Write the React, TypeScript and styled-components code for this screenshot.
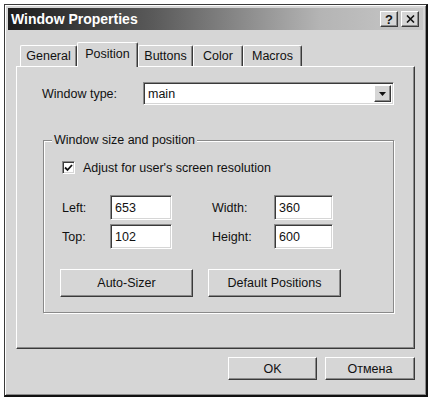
import React from 'react';
import styled, { createGlobalStyle, css } from 'styled-components';

const GlobalStyle = createGlobalStyle`
  html, body {
    margin: 0;
    padding: 0;
    background: #ffffff;
  }
  body {
    padding: 4px;
    font-family: "Liberation Sans", Arial, sans-serif;
    font-size: 12.5px;
    color: #111;
  }
`;

const FACE = '#d6d6d6';

const raised = css`
  border-top: 1px solid #ffffff;
  border-left: 1px solid #ffffff;
  border-right: 1px solid #3a3a3a;
  border-bottom: 1px solid #3a3a3a;
  box-shadow: inset -1px -1px 0 #8a8a8a;
`;

const sunken = css`
  border-top: 1px solid #8a8a8a;
  border-left: 1px solid #8a8a8a;
  border-right: 1px solid #ffffff;
  border-bottom: 1px solid #ffffff;
  box-shadow: inset 1px 1px 0 #3a3a3a, inset -1px -1px 0 ${FACE};
`;

const Window = styled.div`
  box-sizing: border-box;
  width: 424px;
  height: 393px;
  background: ${FACE};
  border: 1px solid #3a3a3a;
  border-right: 2px solid #111;
  border-bottom: 2px solid #111;
  box-shadow: inset 1px 1px 0 #ffffff, inset -1px -1px 0 #8a8a8a;
  padding: 3px;
  display: flex;
  flex-direction: column;
`;

const TitleBar = styled.div`
  height: 22px;
  display: flex;
  align-items: center;
  justify-content: space-between;
  padding: 0 4px 0 3px;
  background: linear-gradient(to right, #1c1c1c 0%, #5a5a5a 35%, #b4b4b4 75%, #c8c8c8 100%);
`;

const Title = styled.span`
  color: #ffffff;
  font-weight: bold;
  font-size: 14px;
  letter-spacing: 0;
`;

const TitleButtons = styled.div`
  display: flex;
  gap: 3px;
`;

const TitleButton = styled.button`
  box-sizing: border-box;
  width: 18px;
  height: 16px;
  padding: 0;
  margin: 0;
  background: ${FACE};
  ${raised};
  display: flex;
  align-items: center;
  justify-content: center;
  font-family: "Liberation Sans", Arial, sans-serif;
  font-weight: bold;
  font-size: 13px;
  color: #111;
`;

const Body = styled.div`
  flex: 1;
  display: flex;
  flex-direction: column;
  padding: 12px 8px 12px 8px;
`;

const TabStrip = styled.div`
  height: 24px;
  display: flex;
  align-items: flex-end;
  padding-left: 4px;
  position: relative;
  z-index: 1;
`;

const Tab = styled.div<{ $active?: boolean; $w: number }>`
  box-sizing: border-box;
  width: ${(p) => p.$w}px;
  height: ${(p) => (p.$active ? 25 : 21)}px;
  margin-bottom: ${(p) => (p.$active ? -1 : 0)}px;
  background: ${FACE};
  border-top: 1px solid #ffffff;
  border-left: 1px solid #ffffff;
  border-right: 1px solid #3a3a3a;
  border-radius: 2px 2px 0 0;
  box-shadow: inset -1px 0 0 #8a8a8a;
  display: flex;
  align-items: ${(p) => (p.$active ? 'flex-start' : 'center')};
  padding-top: ${(p) => (p.$active ? 4 : 0)}px;
  justify-content: center;
  font-size: 12.5px;
`;

const Panel = styled.div`
  box-sizing: border-box;
  height: 283px;
  background: ${FACE};
  ${raised};
  padding: 15px 20px 0 25px;
  display: flex;
  flex-direction: column;
`;

const TypeRow = styled.div`
  display: flex;
  align-items: center;
  height: 23px;
`;

const FieldLabel = styled.span<{ $w: number }>`
  width: ${(p) => p.$w}px;
  flex: none;
`;

const Combo = styled.div`
  box-sizing: border-box;
  flex: 1;
  height: 23px;
  background: #ffffff;
  ${sunken};
  display: flex;
  align-items: center;
  padding: 2px 2px 2px 4px;
`;

const ComboValue = styled.span`
  flex: 1;
`;

const ComboArrow = styled.div`
  box-sizing: border-box;
  width: 17px;
  height: 17px;
  background: ${FACE};
  ${raised};
  display: flex;
  align-items: center;
  justify-content: center;
`;

const Group = styled.div`
  position: relative;
  margin-top: 35px;
  margin-left: 1px;
  height: 173px;
  box-sizing: border-box;
  border: 1px solid #8a8a8a;
  box-shadow: inset 1px 1px 0 #ffffff, 1px 1px 0 #ffffff;
  padding: 20px 0 0 18px;
  display: flex;
  flex-direction: column;
`;

const Legend = styled.span`
  position: absolute;
  top: -8px;
  left: 8px;
  padding: 0 2px;
  background: ${FACE};
  line-height: 15px;
`;

const CheckRow = styled.label`
  display: flex;
  align-items: center;
  gap: 8px;
  height: 13px;
`;

const CheckBox = styled.span`
  box-sizing: border-box;
  width: 13px;
  height: 13px;
  background: #ffffff;
  ${sunken};
  display: flex;
  align-items: center;
  justify-content: center;
`;

const FieldGrid = styled.div`
  margin-top: 21px;
  display: grid;
  grid-template-columns: 48px 62px 40px 62px 59px;
  grid-auto-rows: 25px;
  row-gap: 4px;
  align-items: center;
`;

const Input = styled.div`
  box-sizing: border-box;
  height: 25px;
  background: #ffffff;
  ${sunken};
  padding: 0 4px;
  display: flex;
  align-items: center;
`;

const ButtonRow = styled.div`
  margin-top: 20px;
  margin-left: -2px;
  display: flex;
  gap: 15px;
`;

const PushButton = styled.button<{ $w: number; $h: number }>`
  box-sizing: border-box;
  width: ${(p) => p.$w}px;
  height: ${(p) => p.$h}px;
  background: ${FACE};
  ${raised};
  font-family: "Liberation Sans", Arial, sans-serif;
  font-size: 12.5px;
  color: #111;
  padding: 0;
  margin: 0;
`;

const Footer = styled.div`
  margin-top: 8px;
  display: flex;
  justify-content: flex-end;
  gap: 8px;
`;

const tabs = [
  { name: 'General', w: 57 },
  { name: 'Position', w: 61, active: true },
  { name: 'Buttons', w: 55 },
  { name: 'Color', w: 50 },
  { name: 'Macros', w: 59 },
];

const App: React.FC = () => {
  return (
    <>
      <GlobalStyle />
      <Window>
        <TitleBar>
          <Title>Window Properties</Title>
          <TitleButtons>
            <TitleButton>?</TitleButton>
            <TitleButton>
              <svg width="9" height="8" viewBox="0 0 9 8">
                <path d="M1 0.5 L8 7.5 M8 0.5 L1 7.5" stroke="#111" strokeWidth="1.6" />
              </svg>
            </TitleButton>
          </TitleButtons>
        </TitleBar>
        <Body>
          <TabStrip>
            {tabs.map((t) => (
              <Tab key={t.name} $w={t.w} $active={t.active}>
                {t.name}
              </Tab>
            ))}
          </TabStrip>
          <Panel>
            <TypeRow>
              <FieldLabel $w={101}>Window type:</FieldLabel>
              <Combo>
                <ComboValue>main</ComboValue>
                <ComboArrow>
                  <svg width="7" height="4" viewBox="0 0 7 4">
                    <path d="M0 0 H7 L3.5 4 Z" fill="#111" />
                  </svg>
                </ComboArrow>
              </Combo>
            </TypeRow>
            <Group>
              <Legend>Window size and position</Legend>
              <CheckRow>
                <CheckBox>
                  <svg width="9" height="8" viewBox="0 0 9 8">
                    <path d="M1 3.5 L3.5 6 L8 1" fill="none" stroke="#111" strokeWidth="1.8" />
                  </svg>
                </CheckBox>
                <span>Adjust for user's screen resolution</span>
              </CheckRow>
              <FieldGrid>
                <span>Left:</span>
                <Input>653</Input>
                <span />
                <span>Width:</span>
                <Input>360</Input>
                <span>Top:</span>
                <Input>102</Input>
                <span />
                <span>Height:</span>
                <Input>600</Input>
              </FieldGrid>
              <ButtonRow>
                <PushButton $w={133} $h={28}>Auto-Sizer</PushButton>
                <PushButton $w={133} $h={28}>Default Positions</PushButton>
              </ButtonRow>
            </Group>
          </Panel>
          <Footer>
            <PushButton $w={89} $h={23}>OK</PushButton>
            <PushButton $w={90} $h={23}>Отмена</PushButton>
          </Footer>
        </Body>
      </Window>
    </>
  );
};

export default App;
